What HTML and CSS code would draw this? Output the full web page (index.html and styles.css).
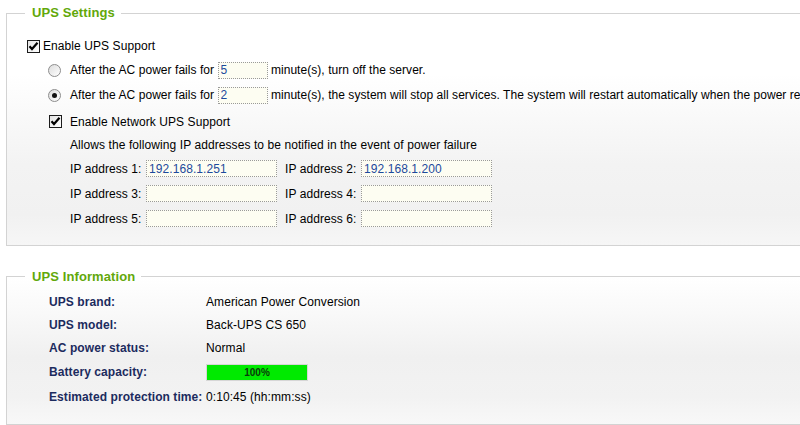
FILE: index.html
```html
<!DOCTYPE html>
<html>
<head>
<meta charset="utf-8">
<title>UPS</title>
<link rel="stylesheet" href="styles.css">
</head>
<body>
<div class="page">
  <fieldset class="box box-settings">
    <legend>UPS Settings</legend>
    <div class="row row-main">
      <span class="cb"><svg width="11" height="11" viewBox="0 0 11 11"><path d="M1.5 5.2 L4 8 L9.5 1.8" fill="none" stroke="#000" stroke-width="2.2"/></svg></span>
      <span>Enable UPS Support</span>
    </div>
    <div class="sub">
      <div class="row">
        <span class="radio"></span>
        <span class="txt">After the AC power fails for <input class="inp inp-min" type="text" value="5"> minute(s), turn off the server.</span>
      </div>
      <div class="row row-3">
        <span class="radio on"><span class="dot"></span></span>
        <span class="txt">After the AC power fails for <input class="inp inp-min" type="text" value="2"> minute(s), the system will stop all services. The system will restart automatically when the power resumes.</span>
      </div>
      <div class="row row-net">
        <span class="cb cb-net"><svg width="11" height="11" viewBox="0 0 11 11"><path d="M1.5 5.2 L4 8 L9.5 1.8" fill="none" stroke="#000" stroke-width="2.2"/></svg></span>
        <span>Enable Network UPS Support</span>
      </div>
      <div class="indent">
        <div class="row row-allow">Allows the following IP addresses to be notified in the event of power failure</div>
        <div class="row row-ip">
          <span class="ip-label">IP address 1:</span><input class="inp inp-ip" type="text" value="192.168.1.251">
          <span class="ip-label ip-label2">IP address 2:</span><input class="inp inp-ip" type="text" value="192.168.1.200">
        </div>
        <div class="row row-ip">
          <span class="ip-label">IP address 3:</span><input class="inp inp-ip" type="text" value="">
          <span class="ip-label ip-label2">IP address 4:</span><input class="inp inp-ip" type="text" value="">
        </div>
        <div class="row row-ip">
          <span class="ip-label">IP address 5:</span><input class="inp inp-ip" type="text" value="">
          <span class="ip-label ip-label2">IP address 6:</span><input class="inp inp-ip" type="text" value="">
        </div>
      </div>
    </div>
  </fieldset>

  <fieldset class="box box-info">
    <legend>UPS Information</legend>
    <div class="info">
      <div class="info-row r1"><span class="lbl">UPS brand:</span><span class="val">American Power Conversion</span></div>
      <div class="info-row r2"><span class="lbl">UPS model:</span><span class="val">Back-UPS CS 650</span></div>
      <div class="info-row r3"><span class="lbl">AC power status:</span><span class="val">Normal</span></div>
      <div class="info-row r4"><span class="lbl">Battery capacity:</span><span class="val"><span class="bar"><span class="fill" style="width:100%">100%</span></span></span></div>
      <div class="info-row r5"><span class="lbl">Estimated protection time:</span><span class="val">0:10:45 (hh:mm:ss)</span></div>
    </div>
  </fieldset>
</div>
</body>
</html>
```

FILE: styles.css
```css
html, body {
  margin: 0;
  padding: 0;
  background: #ffffff;
  overflow: hidden;
}
body {
  font-family: "Liberation Sans", Arial, sans-serif;
  font-size: 12px;
  letter-spacing: 0.08px;
  color: #000;
}
.page {
  width: 1100px;
  padding: 5px 0 0 6px;
}
.box {
  margin: 0;
  border: 1px solid #d3d3d3;
  padding: 13px 0 0 20px;
  min-width: 0;
}
.box legend {
  font-family: "Liberation Sans", Arial, sans-serif;
  font-weight: bold;
  font-size: 13px;
  line-height: 16px;
  letter-spacing: 0.1px;
  color: #62a80a;
  padding: 0 6px 0 7px;
  margin-left: -2px;
}
.box-settings {
  padding-bottom: 14px;
  background: linear-gradient(to bottom, #ffffff 0px, #ffffff 60px, #f3f3f3 150px, #f1f1f1 200px, #f6f6f6 100%);
}
.box-info {
  margin-top: 22px;
  padding-top: 6px;
  padding-bottom: 15px;
  background: linear-gradient(to bottom, #ffffff 0px, #fafafa 30px, #f0f0f0 80px, #f2f2f2 120px, #f8f8f8 100%);
}
.box-info legend {
  position: relative;
  top: 1px;
}
.row {
  display: flex;
  align-items: center;
  height: 24px;
  white-space: nowrap;
}
.cb {
  width: 11px;
  height: 11px;
  border: 1px solid #1c1c1c;
  background: linear-gradient(135deg, #e4e4e4, #ffffff);
  display: inline-flex;
  align-items: center;
  justify-content: center;
  margin-right: 3px;
  flex: none;
}
.cb svg { display: block; }
.sub {
  padding-left: 21px;
}
.radio {
  width: 11px;
  height: 11px;
  border: 1px solid #8d8d8d;
  border-radius: 50%;
  background: linear-gradient(135deg, #dcdcdc, #ffffff);
  margin-right: 9px;
  display: inline-flex;
  align-items: center;
  justify-content: center;
  flex: none;
}
.radio .dot {
  width: 5px;
  height: 5px;
  border-radius: 50%;
  background: #111;
}
.txt {
  letter-spacing: 0.05px;
}
.row-3 { margin-top: 1px; }
.row-net {
  margin-top: 3px;
  height: 23px;
}
.cb-net {
  margin-left: 1px;
  margin-right: 8px;
}
.indent {
  padding-left: 22px;
}
.row-allow { height: 23px; }
.row-ip {
  height: 25px;
}
.inp {
  font-family: "Liberation Sans", Arial, sans-serif;
  font-size: 12px;
  letter-spacing: 0.08px;
  color: #1d4a9c;
  background: #fdfdf2;
  border: 1px dotted #9a9a9a;
  height: 17px;
  box-sizing: border-box;
  padding: 0 2px;
  margin: 0;
  vertical-align: middle;
  outline: none;
}
.inp-min {
  width: 50px;
}
.ip-label {
  width: 73px;
  flex: none;
}
.inp-ip {
  width: 131px;
  margin-left: 3px;
}
.ip-label2 {
  margin-left: 8px;
}
.info {
  padding-left: 22px;
}
.info-row {
  display: grid;
  grid-template-columns: 157px auto;
  align-items: center;
  height: 23px;
  white-space: nowrap;
}
.info-row.r3 { height: 24px; }
.info-row.r4 { height: 24px; }
.info-row.r5 { height: 25px; }
.lbl {
  font-weight: bold;
  color: #1c2b5e;
}
.bar {
  display: block;
  width: 100px;
  height: 15px;
  border: 1px solid #d6d6d6;
  background: #fff;
}
.fill {
  display: block;
  height: 15px;
  background: #00ea00;
  font-size: 10px;
  font-weight: bold;
  letter-spacing: 0;
  line-height: 15px;
  text-align: center;
  color: #0b3a0b;
}
```
